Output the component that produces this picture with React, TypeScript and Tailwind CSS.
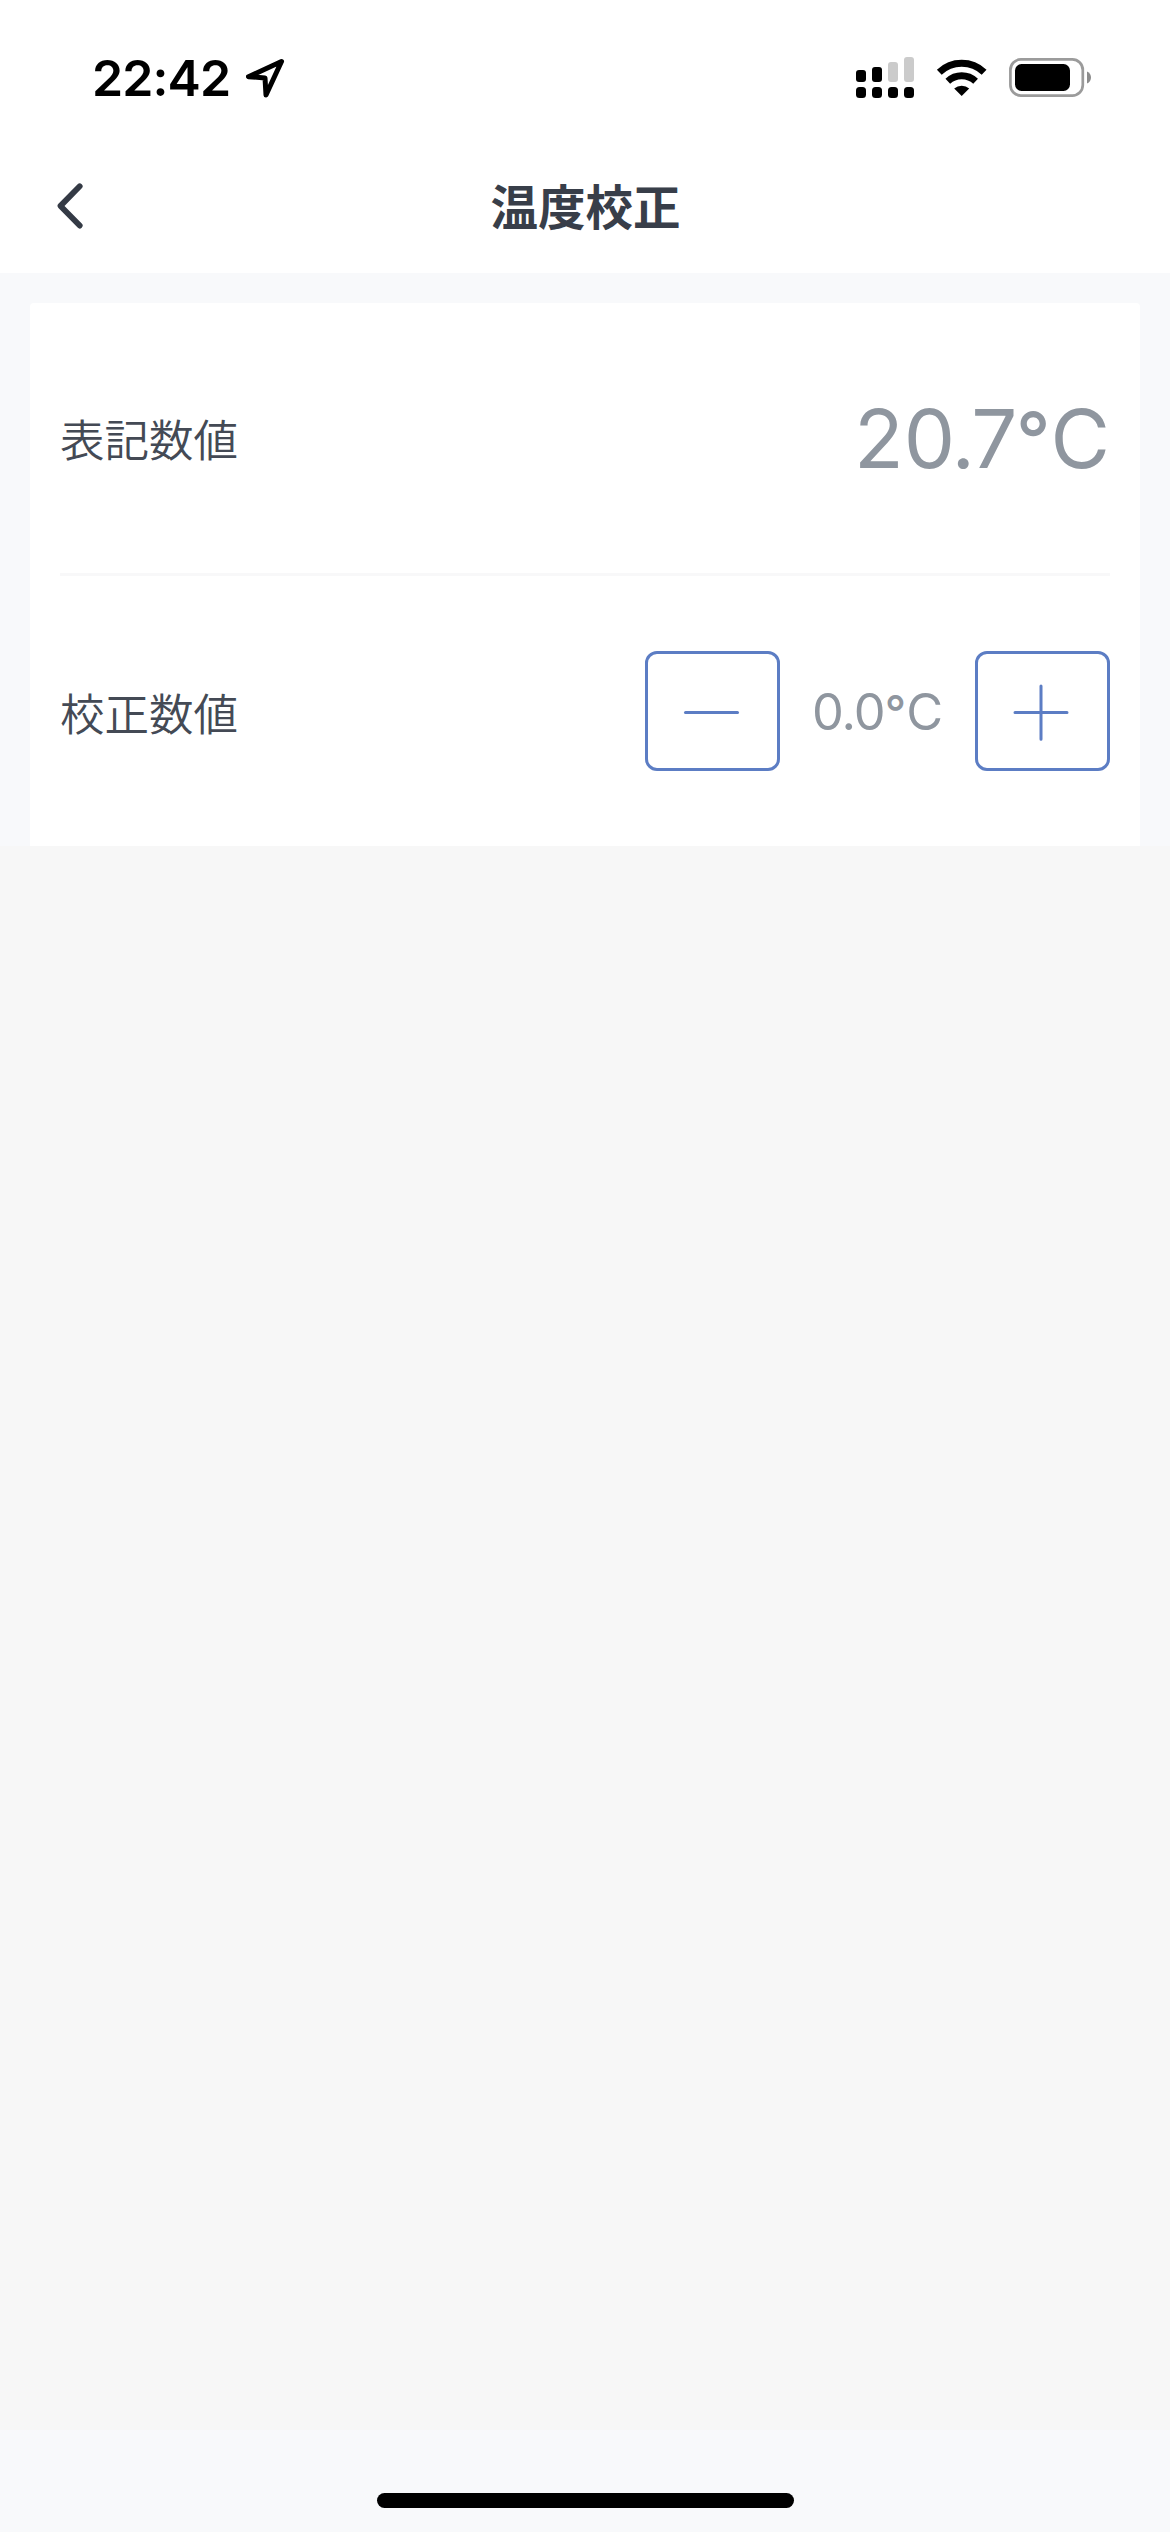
import type { ReactNode } from "react";

function SignalIcon() {
  return (
    <svg width="58" height="42" viewBox="0 0 58 42" className="block">
      <rect x="0" y="13" width="10" height="12" rx="3" fill="#000" />
      <rect x="16" y="10" width="10" height="15" rx="3" fill="#000" />
      <rect x="32" y="5" width="10" height="20" rx="3" fill="#cbcbcb" />
      <rect x="48" y="0" width="10" height="25" rx="3" fill="#cbcbcb" />
      {[0, 16, 32, 48].map((x) => (
        <rect key={x} x={x} y="30" width="10" height="11" rx="3.5" fill="#000" />
      ))}
    </svg>
  );
}

function WifiIcon() {
  return (
    <svg width="52" height="38" viewBox="0 0 52 38" className="block">
      <path d="M3.3 13.8 A32.5 32.5 0 0 1 48.1 13.8" fill="none" stroke="#000" strokeWidth="7" transform="translate(0 -.5)" />
      <path d="M11.8 22.8 A20.2 20.2 0 0 1 39.6 22.8" fill="none" stroke="#000" strokeWidth="6.8" transform="translate(0 -.5)" />
      <path d="M25.7 37 L18.2 29.6 A11 11 0 0 1 33.2 29.6 Z" fill="#000" />
    </svg>
  );
}

function BatteryIcon() {
  return (
    <svg width="83" height="39" viewBox="0 0 83 39" className="block">
      <rect x="1.4" y="1.4" width="72.4" height="36.2" rx="10.5" fill="none" stroke="#9b9b9b" strokeWidth="2.7" />
      <rect x="6" y="6" width="55" height="27" rx="6.5" fill="#000" />
      <path d="M78 13.5 C80.8 14.7 82 17 82 19.5 C82 22 80.8 24.3 78 25.5 Z" fill="#8c8c8c" />
    </svg>
  );
}

function Temperature({ whole, tenths }: { whole: string; tenths: string }) {
  return (
    <>
      {whole}
      <span className="-mr-[0.045em] -ml-[0.045em]">.</span>
      {tenths}
      <span className="-ml-[0.018em] align-[0.028em] text-[0.925em] leading-none font-medium">°</span>C
    </>
  );
}

function StepButton({ plus = false }: { plus?: boolean }) {
  return (
    <button
      aria-label={plus ? "+" : "−"}
      className="h-[120px] w-[135px] rounded-[12px] border-[3px] border-[#5c7dc4]"
    >
      <svg width="129" height="114" viewBox="3 3 129 114" className="block" fill="none" stroke="#5c7dc4" strokeWidth="3" strokeLinecap="round">
        {plus ? <path d="M40 61.4H92M66 34.9V88.2" /> : <path d="M40.5 61.4H92.5" />}
      </svg>
    </button>
  );
}

function Row({ children }: { children: ReactNode }) {
  return <div className="flex flex-1 items-center justify-between">{children}</div>;
}

export default function App() {
  return (
    <div className="flex h-[2532px] w-[1170px] flex-col bg-[#f8f9fb] font-['Inter','Noto_Sans_CJK_JP',sans-serif]">
      <header className="flex h-[273px] flex-col bg-white">
        <div className="flex h-[141px] items-start justify-between pr-[78px] pl-[92px]">
          <div className="flex items-start pt-[57px]">
            <span className="w-[154px] pt-px text-[50px] leading-[40px] font-semibold tracking-[-0.9px] whitespace-nowrap text-black">22:42</span>
            <svg width="40" height="42" viewBox="0 0 40 42" className="block" fill="none" stroke="#000" strokeWidth="5" strokeLinejoin="round">
              <path d="M35.5 4.5 L2.5 19.7 L19 20.9 L20 38 Z" />
            </svg>
          </div>
          <div className="flex items-start pt-[57px]">
            <SignalIcon />
            <div className="mt-[2px] ml-[22px]"><WifiIcon /></div>
            <div className="mt-px ml-[21px]"><BatteryIcon /></div>
          </div>
        </div>
        <div className="grid h-[132px] grid-cols-[120px_1fr_120px] items-center">
          <svg width="30" height="48" viewBox="0 0 30 48" className="-mt-[2px] ml-[54px] block" fill="none" stroke="#343a45" strokeWidth="5.8" strokeLinecap="round" strokeLinejoin="round">
            <path d="M25.7 4.3 L6.5 23.9 L25.7 43.6" />
          </svg>
          <h1 className="pt-px pl-px text-center text-[47.5px] leading-[60px] font-bold text-[#383e49]">温度校正</h1>
        </div>
      </header>
      <main className="flex flex-1 flex-col">
        <section className="mx-[30px] mt-[30px] flex h-[543px] flex-col rounded-t-[4px] bg-white px-[30px]">
          <Row>
            <span className="pt-[6px] text-[44.5px] leading-[60px] font-[350] text-[#444a55]">表記数値</span>
            <span className="pt-[2px] text-[81.5px] leading-[90px] whitespace-nowrap text-[#8f969f]">
              <Temperature whole="20" tenths="7" />
            </span>
          </Row>
          <div className="h-[3px] shrink-0 bg-[#f8f8f9]" />
          <Row>
            <span className="pt-[8px] text-[44.5px] leading-[60px] font-[350] text-[#444a55]">校正数値</span>
            <div className="flex items-center">
              <StepButton />
              <span className="w-[195px] pt-[2px] text-center text-[50.5px] leading-[60px] whitespace-nowrap text-[#8f969f]">
                <Temperature whole="0" tenths="0" />
              </span>
              <StepButton plus />
            </div>
          </Row>
        </section>
        <div className="flex-1 bg-[#f7f7f7]" />
      </main>
      <footer className="flex h-[102px] justify-center pt-[63px]">
        <div className="h-[15px] w-[417px] rounded-full bg-black" />
      </footer>
    </div>
  );
}
